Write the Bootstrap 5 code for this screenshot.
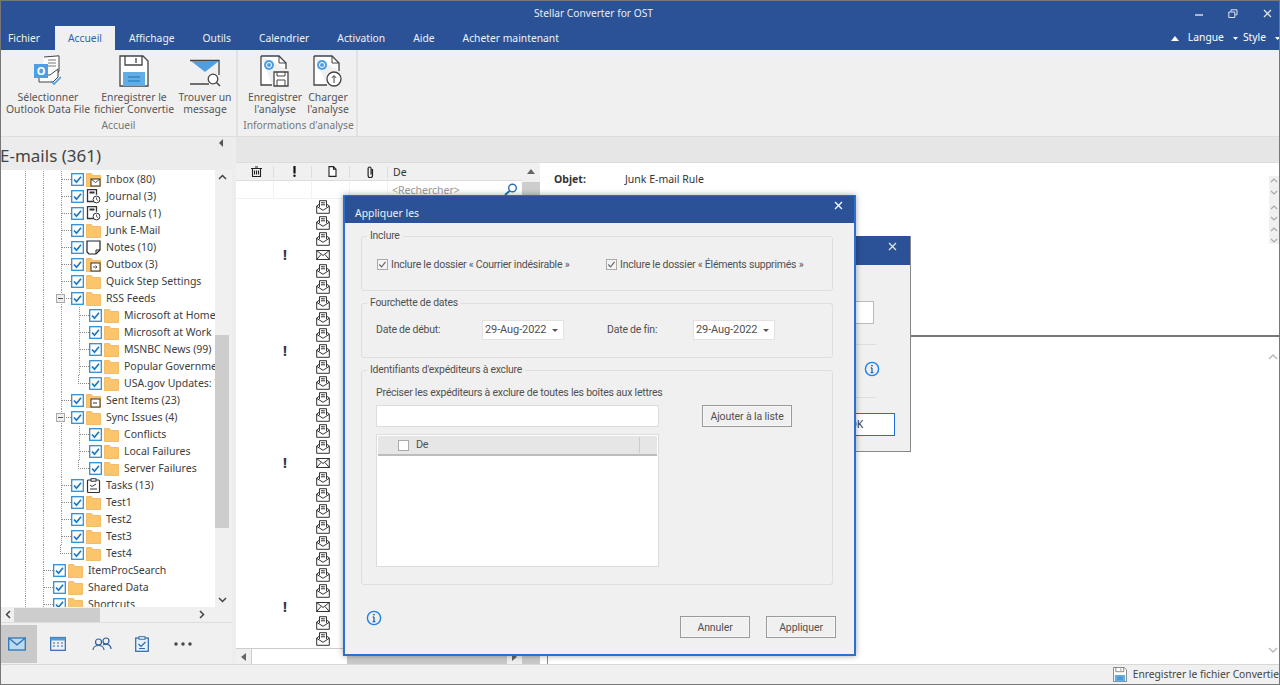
<!DOCTYPE html>
<html lang="fr"><head><meta charset="utf-8"><title>Stellar Converter for OST</title>
<link href="https://cdn.jsdelivr.net/npm/bootstrap@5.3.0/dist/css/bootstrap.min.css" rel="stylesheet">
<style>
html,body{margin:0;height:685px;overflow:hidden;background:#fff}
body{font-family:"Noto Sans","Open Sans",sans-serif;font-size:11px;color:#444}
svg{display:block;flex:none}
.app{width:1280px;height:685px;border:1px solid #777}
.tbar{height:25px;background:#2b5296;color:#e8edf5;font-size:10.2px;padding-left:533px}
.wctl{gap:25px;margin-right:7px}
.tabs{height:24px;background:#2b5296;color:#fff;font-size:10.3px;padding-left:7px}
.tabi{padding:0 14px;height:24px;line-height:24px;white-space:nowrap;color:#eef2f8}
.tabi.first{padding:0 15px 0 0}
.tabi.on{background:#f0f0f0;color:#2f62b3;padding:0 13px}
.rite{gap:5px;margin-right:-1px}
.ribbon{height:87px;background:#f0f0f0;border-bottom:1px solid #ddd}
.rgrp{border-right:2px solid #e2e2e2;padding-top:5px}
.g1{width:237px}.g2{width:120px}
.rbtn{line-height:12px;font-size:10.4px;color:#555;text-align:center;white-space:nowrap}
.rbtn svg{margin:0 auto 4px}
.b1{width:88px;margin-left:3px}.b2{width:84px}.b3{width:58px}.b4{width:58px;margin-left:8px}.b5{width:50px;margin-left:-1px}
.rlbl{font-size:10.3px;color:#777;line-height:12px;text-align:center;margin-top:4px}
.g2 .rlbl{padding-left:3px}
.mainr{height:527px}
.lpane{width:231px;background:#f0f0f0}
.lhead{height:33px;background:#ececec;font-size:17px;color:#444;line-height:23px;padding:7px 3px 0 0;white-space:nowrap}
.lttl{margin-left:-1px}
.tri-l{width:0;height:0;border:4px solid transparent;border-right:4px solid #555;border-left:0;margin:-5px 6px 0 auto}
.treew{height:437px}
.tree{width:214px;background:#fff;overflow:hidden;padding-top:1px}
.trow{height:17px;white-space:nowrap;font-size:10.5px;color:#3d3d3d;background-repeat:repeat-y;background-size:1px 2px;
 background-image:linear-gradient(#999 50%,transparent 50%),linear-gradient(#999 50%,transparent 50%);background-position:24px 0,42px 0}
.l1{padding-left:42px}.l2,.l2e{padding-left:60px}.l3,.l3e{padding-left:78px}
.l2,.l3e{background-image:linear-gradient(#999 50%,transparent 50%),linear-gradient(#999 50%,transparent 50%),linear-gradient(#999 50%,transparent 50%);background-position:24px 0,42px 0,60px 0}
.l3{background-image:linear-gradient(#999 50%,transparent 50%),linear-gradient(#999 50%,transparent 50%),linear-gradient(#999 50%,transparent 50%),linear-gradient(#999 50%,transparent 50%);background-position:24px 0,42px 0,60px 0,78px 0}
.hl{width:10px;height:1px;border-bottom:1px dotted #888;flex:none}
.hlend{height:9px;align-self:flex-start;border-left:1px dotted #888;margin-left:-1px;width:11px}
.trow .nm{margin-left:5px}
.trow .ck{margin-right:2px}
.exp{position:absolute;left:-5px;top:-4px;width:9px;height:9px;border:1px solid #aaa;background:#eee}
.exp::after{content:"";position:absolute;left:1px;right:1px;top:3px;height:1px;background:#555}
.vsb{width:14px;background:#f0f0f0}
.vthumb{height:193px;background:#cdcdcd;margin-top:155px}
.hsb{height:15px;width:228px;background:#f0f0f0}
.hthumb{width:86px;height:14px;background:#cdcdcd;margin-left:3px}
.lnav{height:42px;background:#f0f0f0;border-top:1px solid #ddd}
.nvb{width:36px;height:38px}.nvb.on{background:#c9c9c9;padding-right:5px}
.nv2{width:41px}.nv3{width:47px}.nv4{width:33px}.nv5{width:50px}
.gap4{width:4px;background:#ededed}
.band{height:26px;background:#e6e6e6;border-bottom:1px solid #dcdcdc}
.lstw{width:304px}
.lst{width:286px}
.lhd{height:18px;background:#f0f0f0;border-bottom:1px solid #ddd;font-size:10.5px;color:#333}
.cl{width:38px;height:12px;border-right:1px solid #ddd;padding-left:3px}
.dehd{margin:2px 0 0 5px}
.srow{height:18px;border-bottom:1px solid #f2f2f2;color:#999;font-size:10.5px}
.srch{margin:2px 0 0 4px}
.scl{width:38px;height:18px;border-right:1px solid #f2f2f2}
.mrows{height:447px;overflow:hidden}
.mr{height:16px}
.bang{width:80px;padding-left:18px;text-align:center;font-weight:700;font-size:14px;color:#333;line-height:16px}
.lvs{width:18px;background:#f0f0f0}
.lup{height:17px}
.lthumb{height:60px;background:#cdcdcd;margin-top:2px}
.lvb{height:16px;background:#c9c9c9}
.up-t{width:0;height:0;border:4px solid transparent;border-bottom:5px solid #666;border-top:0}
.lhs{height:16px;background:#f0f0f0;border-top:1px solid #ccc;width:286px}
.arrb{width:16px;border-right:1px solid #ccc}
.arrr{width:15px;background:#f0f0f0}
.lhtrack{width:95px;background:#fff}
.lhshadow{background:#c9c9c9}
.rp{background:#fff}
.rtop{height:174px;border-bottom:2px solid #777;padding:9px 0 0 14px;font-size:10.5px;color:#333}
.objl{width:71px;font-weight:700}
.mini{width:10px;background:#f0f0f0;margin-top:2px}
.rbot{padding-left:7px}
.rin{border-left:1px solid #888;padding:17px 1px 11px 0}
.status{height:20px;background:#f0f0f0;border-top:1px solid #d8d8d8;font-size:10.25px;color:#444;white-space:nowrap;overflow:hidden}
.stsv{margin-right:6px}
.dlgb{left:609px;top:235px;width:301px;height:216px;background:#f0f0f0;border:1px solid #888;border-top:0}
.hdb{height:29px;background:#2b5296;padding:6px 13px 0 0}
.inb{height:23px;background:#fff;border:1px solid #bbb;margin:36px 36px 0 0}
.sepb{height:1px;background:#ddd;margin:20px 34px 0 0}
.infb{margin:16px 30px 0 auto}
.okb{width:78px;height:23px;background:#fff;border:1px solid #1f6fe0;margin:15px 15px 0 auto;color:#333;font-size:10.5px}
.dlg{left:342px;top:194px;width:513px;height:461px;background:#f0f0f0;border:2px solid #2a6fd2;border-top:0;box-shadow:0 0 6px rgba(0,0,0,.35)}
.hd{height:28px;background:#2b5296;color:#eef2f8;font-size:10.4px;padding:0 11px 0 10px;border-top:1px solid #2b6cc8}
.hdt{margin-top:10px;line-height:15px}.hdx{margin-top:5px}
.dbody{padding:6px 21px 0 16px;color:#505050;font-family:Roboto,sans-serif;font-size:10.5px;letter-spacing:-.22px}
.grp{border:1px solid #dedede;border-radius:3px;padding:0 0 0 14px;margin:0 0 5px;min-width:0}
.grp legend{font-size:10.4px;line-height:14px;margin:0 0 0 -9px;padding:0 3px;color:#505050}
.gi{height:62px}.gd{height:62px}.gx{height:222px}
.rowi{padding-top:14px}.rowd{padding-top:10px}
.c1{gap:3px;margin-left:1px}
.cw1{width:228px}
.dt{width:82px;height:20px;background:#fff;border:1px solid #e2e2e2;font-size:11px;padding:0 5px 0 2px;color:#505050;letter-spacing:-.1px}
.caret{width:0;height:0;border:3px solid transparent;border-top:3px solid #555;border-bottom:0}
.dl1{width:106px}.dl2{width:86px;margin-left:43px}
.exin{width:283px;height:22px;background:#fff;border:1px solid #dcdcdc}
.tbl{width:283px;height:133px;background:#fff;border:1px solid #dcdcdc;margin-top:7px;padding:1px}
.thd{height:20px;background:#e6e6e6;border-bottom:2px solid #bcbcbc;padding-left:20px;gap:7px;font-size:10.8px}
.thc{margin-left:auto;margin-right:17px;width:1px;height:16px;background:#ccc}
.dbtn{background:#f0f0f0;border:1px solid #9a9a9a;border-radius:0;color:#505050;font-family:Roboto,sans-serif;font-size:10.5px;padding:0;line-height:19px;letter-spacing:-.1px;box-shadow:inset 0 0 0 1px #f7f7f7}
.bad{width:90px;height:22px;margin-left:43px}
.bft{width:70px;height:22px}
.dfoot{padding:0 18px 16px 21px;margin-top:auto}
.infm{margin-bottom:12px}
.ex8{margin-top:8px;height:20px}
</style></head><body>
<svg width="0" height="0" class="position-absolute"><defs>
<symbol id="fo" viewBox="0 0 15 15"><path d="M.5 1.500h5l1.500 2h7.500v11H.5z" fill="#fcc56c" stroke="#eeb458" stroke-width=".8"/></symbol>
<symbol id="ck" viewBox="0 0 13 13"><rect x=".7" y=".7" width="11.600" height="11.600" fill="#fff" stroke="#2e8fd6" stroke-width="1.300"/><path d="M3 6.500l2.500 2.700 4.500-5.400" fill="none" stroke="#1c78c2" stroke-width="1.700"/></symbol>
<symbol id="mo" viewBox="0 0 14 14"><path d="M.7 6v7.300h12.600V6L10.500 4M.7 6l2.800-2M.7 6.300L7 10.300l6.300-4M3.500 7V.7h7V7M5 2.800h4M5 4.800h4" fill="none" stroke="#333" stroke-width="1"/></symbol>
<symbol id="mc" viewBox="0 0 14 14"><rect x=".7" y="2.500" width="12.600" height="9" fill="none" stroke="#333"/><path d="M.7 2.500L7 7.500l6.300-5M.7 11.500L5 6.500M13.300 11.500L9 6.500" fill="none" stroke="#333"/></symbol>
<symbol id="inf" viewBox="0 0 16 16"><circle cx="8" cy="8" r="6.600" fill="none" stroke="#1f80e8" stroke-width="1.400"/><path d="M8 7v4.500M6.600 11.600h2.800M6.800 7h1.200" stroke="#1f66b8" stroke-width="1.300" fill="none"/><circle cx="8" cy="4.600" r=".9" fill="#1f66b8"/></symbol>
<symbol id="jr" viewBox="0 0 15 15"><path d="M8 12.500H1.500V.7h9v5" fill="none" stroke="#333" stroke-width="1.300"/><path d="M3.500 2.500h5v2h-5z" fill="#333"/><circle cx="10.500" cy="10.500" r="3.400" fill="#fff" stroke="#333"/><path d="M10.500 8.500v2l1.500 1" fill="none" stroke="#333" stroke-width=".8"/></symbol>
<symbol id="cbx" viewBox="0 0 12 12"><rect x=".5" y=".5" width="11" height="11" fill="#f4f4f4" stroke="#a5a5a5"/><path d="M2.500 6l2.500 2.600 4.300-5.400" fill="none" stroke="#666" stroke-width="1.200"/></symbol>
<symbol id="sv" viewBox="0 0 30 32"><path d="M1 1h23l5 5v25H1z" fill="#fff" stroke="#444" stroke-width="1.300"/><path d="M6 1v9h17V1M17 3v5" fill="none" stroke="#444" stroke-width="1.300"/><rect x="4" y="17" width="22" height="14" fill="#62aee4"/><path d="M9 22h12M9 26h12" stroke="#2a6ca8" stroke-width="1.200"/></symbol>
</defs></svg>
<div class="app d-flex flex-column position-relative overflow-hidden">
 <div class="tbar d-flex align-items-center justify-content-between">
  <span>Stellar Converter for OST</span>
  <div class="d-flex align-items-center wctl">
   <svg width="8" height="10" viewBox="0 0 8 10"><path d="M0 6h8" stroke="#dfe6f2" stroke-width="1.400"/></svg>
   <svg width="10" height="10" viewBox="0 0 10 10"><path d="M3 2.500V.8h6v5H7.200M.8 3h6v5.500h-6z" fill="none" stroke="#dfe6f2"/></svg>
   <svg width="9" height="9" viewBox="0 0 9 9"><path d="M1 1l7 7M8 1L1 8" stroke="#dfe6f2" stroke-width="1.300"/></svg>
  </div>
 </div>
 <div class="tabs d-flex align-items-center">
  <span class="tabi first">Fichier</span><span class="tabi on">Accueil</span><span class="tabi">Affichage</span><span class="tabi">Outils</span><span class="tabi">Calendrier</span><span class="tabi">Activation</span><span class="tabi">Aide</span><span class="tabi">Acheter maintenant</span>
  <div class="ms-auto d-flex align-items-center rite">
   <svg class="me-1" width="8" height="5" viewBox="0 0 8 5"><path d="M4 0l4 5H0z" fill="#fff"/></svg><span class="me-1">Langue</span>
   <svg width="5" height="3" viewBox="0 0 5 3"><path d="M0 0h5L2.500 3z" fill="#fff"/></svg><span>Style</span>
   <svg class="ms-1" width="5" height="3" viewBox="0 0 5 3"><path d="M0 0h5L2.500 3z" fill="#fff"/></svg>
  </div>
 </div>
 <div class="ribbon d-flex">
  <div class="rgrp g1 d-flex flex-column">
   <div class="d-flex">
    <div class="rbtn b1"><svg width="31" height="32" viewBox="0 0 31 32"><path d="M11 2L26 .8V16l-4 6H8" fill="#fff" stroke="#444"/><path d="M15 5h8M15 8h8M15 11h8" stroke="#777"/><path d="M6 20v7h14l5-5V14l-8 6z" fill="#fff" stroke="#444"/><rect x="1" y="9" width="14" height="14" fill="#4f9fe0"/><text x="8" y="20" text-anchor="middle" fill="#fff" font-size="11" font-weight="700" font-family="Noto Sans">O</text><path d="M18 26l3 3 7-7" fill="none" stroke="#4d9fe0" stroke-width="1.600"/></svg>Sélectionner<br>Outlook Data File</div>
    <div class="rbtn b2"><svg width="30" height="32" viewBox="0 0 30 32"><use href="#sv"/></svg>Enregistrer le<br>fichier Convertie</div>
    <div class="rbtn b3"><svg width="32" height="32" viewBox="0 -4 32 32"><path d="M1 1.500h29V16M20 25H1z" fill="none" stroke="#444" stroke-width="1.300"/><path d="M2 2l14 11L30 2z" fill="#4f9fe0"/><circle cx="24" cy="20" r="4.800" fill="#fff" stroke="#444" stroke-width="1.300"/><path d="M27.500 23.500l3.500 3.500" stroke="#444" stroke-width="1.500"/></svg>Trouver un<br>message</div>
   </div>
   <div class="rlbl">Accueil</div>
  </div>
  <div class="rgrp g2 d-flex flex-column">
   <div class="d-flex">
    <div class="rbtn b4"><svg width="30" height="32" viewBox="0 0 30 32"><path d="M1 1h18l7 7v6M12 30H1V1" fill="#fff" stroke="#444" stroke-width="1.300"/><path d="M19 1v7h7" fill="none" stroke="#444"/><circle cx="9" cy="10" r="5" fill="#4f9fe0"/><circle cx="9" cy="10" r="2.500" fill="none" stroke="#fff"/><path d="M14 17h14v14H14z" fill="#fff" stroke="#444" stroke-width="1.300"/><path d="M17 17v4h8v-4M17 31v-6h8v6" fill="none" stroke="#444"/></svg>Enregistrer<br>l'analyse</div>
    <div class="rbtn b5"><svg width="30" height="32" viewBox="0 0 30 32"><path d="M1 1h18l7 7v8M14 30H1V1" fill="#fff" stroke="#444" stroke-width="1.300"/><path d="M19 1v7h7" fill="none" stroke="#444"/><circle cx="9" cy="10" r="5" fill="#4f9fe0"/><circle cx="9" cy="10" r="2.500" fill="none" stroke="#fff"/><circle cx="21" cy="24" r="7" fill="#fff" stroke="#444" stroke-width="1.300"/><path d="M21 28v-7M18.800 23l2.200-2.500 2.200 2.500" fill="none" stroke="#444"/></svg>Charger<br>l'analyse</div>
   </div>
   <div class="rlbl">Informations d'analyse</div>
  </div>
 </div>
 <div class="mainr d-flex">
  <div class="lpane d-flex flex-column">
   <div class="lhead d-flex"><span class="lttl">E-mails (361)</span><div class="tri-l"></div></div>
   <div class="treew d-flex">
    <div class="tree">
     <div class="trow l2 d-flex align-items-center"><span class="hl"></span><svg class="ck" width="13" height="13"><use href="#ck"/></svg><svg width="15" height="15" viewBox="0 0 15 15"><use href="#fo"/><rect x="5" y="7" width="9" height="7" fill="#fff" stroke="#333"/><path d="M5 7l4.500 3.500L14 7" fill="none" stroke="#333" stroke-width=".8"/></svg><span class="nm">Inbox (80)</span></div>
     <div class="trow l2 d-flex align-items-center"><span class="hl"></span><svg class="ck" width="13" height="13"><use href="#ck"/></svg><svg width="15" height="15"><use href="#jr"/></svg><span class="nm">Journal (3)</span></div>
     <div class="trow l2 d-flex align-items-center"><span class="hl"></span><svg class="ck" width="13" height="13"><use href="#ck"/></svg><svg width="15" height="15"><use href="#jr"/></svg><span class="nm">journals (1)</span></div>
     <div class="trow l2 d-flex align-items-center"><span class="hl"></span><svg class="ck" width="13" height="13"><use href="#ck"/></svg><svg width="15" height="15"><use href="#fo"/></svg><span class="nm">Junk E-Mail</span></div>
     <div class="trow l2 d-flex align-items-center"><span class="hl"></span><svg class="ck" width="13" height="13"><use href="#ck"/></svg><svg width="15" height="15" viewBox="0 0 15 15"><path d="M1 1h13v9l-4 4H3l-2-2z" fill="#fff" stroke="#222" stroke-width="1.200"/><path d="M10 14v-4h4" fill="none" stroke="#222"/></svg><span class="nm">Notes (10)</span></div>
     <div class="trow l2 d-flex align-items-center"><span class="hl"></span><svg class="ck" width="13" height="13"><use href="#ck"/></svg><svg width="15" height="15" viewBox="0 0 15 15"><use href="#fo"/><rect x="5" y="6" width="9" height="8" fill="#fff" stroke="#333"/><path d="M7 10h4M9.500 8.500L11 10l-1.500 1.500" fill="none" stroke="#333" stroke-width=".8"/></svg><span class="nm">Outbox (3)</span></div>
     <div class="trow l2 d-flex align-items-center"><span class="hl"></span><svg class="ck" width="13" height="13"><use href="#ck"/></svg><svg width="15" height="15"><use href="#fo"/></svg><span class="nm">Quick Step Settings</span></div>
     <div class="trow l2 d-flex align-items-center"><span class="hl position-relative"><span class="exp"></span></span><svg class="ck" width="13" height="13"><use href="#ck"/></svg><svg width="15" height="15"><use href="#fo"/></svg><span class="nm">RSS Feeds</span></div>
     <div class="trow l3 d-flex align-items-center"><span class="hl"></span><svg class="ck" width="13" height="13"><use href="#ck"/></svg><svg width="15" height="15"><use href="#fo"/></svg><span class="nm">Microsoft at Home</span></div>
     <div class="trow l3 d-flex align-items-center"><span class="hl"></span><svg class="ck" width="13" height="13"><use href="#ck"/></svg><svg width="15" height="15"><use href="#fo"/></svg><span class="nm">Microsoft at Work</span></div>
     <div class="trow l3 d-flex align-items-center"><span class="hl"></span><svg class="ck" width="13" height="13"><use href="#ck"/></svg><svg width="15" height="15"><use href="#fo"/></svg><span class="nm">MSNBC News (99)</span></div>
     <div class="trow l3 d-flex align-items-center"><span class="hl"></span><svg class="ck" width="13" height="13"><use href="#ck"/></svg><svg width="15" height="15"><use href="#fo"/></svg><span class="nm">Popular Government</span></div>
     <div class="trow l3e d-flex align-items-center"><span class="hl hlend"></span><svg class="ck" width="13" height="13"><use href="#ck"/></svg><svg width="15" height="15"><use href="#fo"/></svg><span class="nm">USA.gov Updates: Y</span></div>
     <div class="trow l2 d-flex align-items-center"><span class="hl"></span><svg class="ck" width="13" height="13"><use href="#ck"/></svg><svg width="15" height="15" viewBox="0 0 15 15"><use href="#fo"/><rect x="5" y="6" width="9" height="8" fill="#fff" stroke="#333"/><path d="M7 10h4" stroke="#333"/></svg><span class="nm">Sent Items (23)</span></div>
     <div class="trow l2 d-flex align-items-center"><span class="hl position-relative"><span class="exp"></span></span><svg class="ck" width="13" height="13"><use href="#ck"/></svg><svg width="15" height="15"><use href="#fo"/></svg><span class="nm">Sync Issues (4)</span></div>
     <div class="trow l3 d-flex align-items-center"><span class="hl"></span><svg class="ck" width="13" height="13"><use href="#ck"/></svg><svg width="15" height="15"><use href="#fo"/></svg><span class="nm">Conflicts</span></div>
     <div class="trow l3 d-flex align-items-center"><span class="hl"></span><svg class="ck" width="13" height="13"><use href="#ck"/></svg><svg width="15" height="15"><use href="#fo"/></svg><span class="nm">Local Failures</span></div>
     <div class="trow l3e d-flex align-items-center"><span class="hl hlend"></span><svg class="ck" width="13" height="13"><use href="#ck"/></svg><svg width="15" height="15"><use href="#fo"/></svg><span class="nm">Server Failures</span></div>
     <div class="trow l2 d-flex align-items-center"><span class="hl"></span><svg class="ck" width="13" height="13"><use href="#ck"/></svg><svg width="15" height="15" viewBox="0 0 15 15"><rect x="1.500" y="2" width="12" height="12.500" fill="#fff" stroke="#333" stroke-width="1.200" rx="1"/><rect x="5" y=".7" width="5" height="2.500" fill="#fff" stroke="#333"/><path d="M4 7l2 1.500L10 6M4 11h7" fill="none" stroke="#333"/></svg><span class="nm">Tasks (13)</span></div>
     <div class="trow l2 d-flex align-items-center"><span class="hl"></span><svg class="ck" width="13" height="13"><use href="#ck"/></svg><svg width="15" height="15"><use href="#fo"/></svg><span class="nm">Test1</span></div>
     <div class="trow l2 d-flex align-items-center"><span class="hl"></span><svg class="ck" width="13" height="13"><use href="#ck"/></svg><svg width="15" height="15"><use href="#fo"/></svg><span class="nm">Test2</span></div>
     <div class="trow l2 d-flex align-items-center"><span class="hl"></span><svg class="ck" width="13" height="13"><use href="#ck"/></svg><svg width="15" height="15"><use href="#fo"/></svg><span class="nm">Test3</span></div>
     <div class="trow l2e d-flex align-items-center"><span class="hl hlend"></span><svg class="ck" width="13" height="13"><use href="#ck"/></svg><svg width="15" height="15"><use href="#fo"/></svg><span class="nm">Test4</span></div>
     <div class="trow l1 d-flex align-items-center"><span class="hl"></span><svg class="ck" width="13" height="13"><use href="#ck"/></svg><svg width="15" height="15"><use href="#fo"/></svg><span class="nm">ItemProcSearch</span></div>
     <div class="trow l1 d-flex align-items-center"><span class="hl"></span><svg class="ck" width="13" height="13"><use href="#ck"/></svg><svg width="15" height="15"><use href="#fo"/></svg><span class="nm">Shared Data</span></div>
     <div class="trow l1 d-flex align-items-center"><span class="hl"></span><svg class="ck" width="13" height="13"><use href="#ck"/></svg><svg width="15" height="15"><use href="#fo"/></svg><span class="nm">Shortcuts</span></div>
    </div>
    <div class="vsb d-flex flex-column align-items-center position-relative">
     <svg class="mt-1" width="9" height="6" viewBox="0 0 9 6"><path d="M1 5l3.500-3.500L8 5" fill="none" stroke="#444" stroke-width="1.500"/></svg>
     <div class="vthumb w-100"></div>
     <svg class="mt-auto mb-1" width="9" height="6" viewBox="0 0 9 6"><path d="M1 1l3.500 3.500L8 1" fill="none" stroke="#444" stroke-width="1.500"/></svg>
    </div>
   </div>
   <div class="hsb d-flex align-items-center">
    <svg class="ms-1" width="6" height="9" viewBox="0 0 6 9"><path d="M5 1L1.500 4.500 5 8" fill="none" stroke="#444" stroke-width="1.500"/></svg>
    <div class="hthumb"></div>
    <svg class="ms-auto me-4" width="6" height="9" viewBox="0 0 6 9"><path d="M1 1l3.500 3.500L1 8" fill="none" stroke="#444" stroke-width="1.500"/></svg>
   </div>
   <div class="lnav d-flex align-items-center">
    <div class="nvb on d-flex align-items-center justify-content-center"><svg width="18" height="14" viewBox="0 0 18 14"><rect x=".7" y="1" width="16.600" height="12" fill="#bcd9f0" stroke="#2c77bb" stroke-width="1.300"/><path d="M1 1.300l8 6.500 8-6.500" fill="none" stroke="#2c77bb" stroke-width="1.300"/></svg></div>
    <div class="nvb nv2 d-flex align-items-center justify-content-center"><svg width="16" height="15" viewBox="0 0 16 15"><rect x=".7" y="1.500" width="14.600" height="12.800" fill="none" stroke="#2c6aa8" stroke-width="1.200"/><rect x=".7" y="1.500" width="14.600" height="3" fill="#5a9ad0"/><path d="M3 7h2M7 7h2M11 7h2M3 10h2M7 10h2M11 10h2" stroke="#2c6aa8" stroke-width="1.200"/></svg></div>
    <div class="nvb nv3 d-flex align-items-center justify-content-center"><svg width="20" height="14" viewBox="0 0 20 14"><circle cx="6.500" cy="5" r="3" fill="none" stroke="#2c5f98" stroke-width="1.200"/><circle cx="14" cy="4" r="3" fill="none" stroke="#2c5f98" stroke-width="1.200"/><path d="M1 13c0-6 11-6 11 0M11 8c4-2 8 0 8 4" fill="none" stroke="#2c5f98" stroke-width="1.200"/></svg></div>
    <div class="nvb nv4 d-flex align-items-center justify-content-center"><svg width="14" height="16" viewBox="0 0 14 16"><rect x=".7" y="2" width="12.600" height="13.300" fill="#e4f0fa" stroke="#2c6aa8" stroke-width="1.200"/><rect x="4" y=".7" width="6" height="2.500" fill="#fff" stroke="#2c6aa8"/><path d="M3.500 8l2.500 2.500 4.500-4.500M4 12.500h6" fill="none" stroke="#2c6aa8" stroke-width="1.200"/></svg></div>
    <div class="nvb nv5 d-flex align-items-center justify-content-center"><svg width="20" height="4" viewBox="0 0 20 4"><circle cx="3" cy="2" r="1.700" fill="#444"/><circle cx="10" cy="2" r="1.700" fill="#444"/><circle cx="17" cy="2" r="1.700" fill="#444"/></svg></div>
   </div>
  </div>
  <div class="gap4"></div>
  <div class="flex-grow-1 d-flex flex-column">
   <div class="band"></div>
   <div class="flex-grow-1 d-flex">
    <div class="lstw d-flex">
     <div class="lst d-flex flex-column bg-white">
      <div class="lhd d-flex align-items-center">
       <div class="cl d-flex justify-content-center align-items-center"><svg width="11" height="11" viewBox="0 0 11 11"><path d="M4 1h3M0 2.500h11M1.500 2.500v8h8v-8M3.500 4.500v4M5.500 4.500v4M7.500 4.500v4" fill="none" stroke="#222" stroke-width="1.100"/></svg></div>
       <div class="cl d-flex justify-content-center align-items-center"><svg width="3" height="11" viewBox="0 0 3 11"><path d="M1.500 0v7.500" stroke="#111" stroke-width="2.200"/><circle cx="1.500" cy="9.700" r="1.200" fill="#111"/></svg></div>
       <div class="cl d-flex justify-content-center align-items-center"><svg width="9" height="11" viewBox="0 0 9 11"><path d="M1 .6h4.500L8 3.200v7.200H1zM5.500.6v2.600H8" fill="#fff" stroke="#222" stroke-width="1.100"/></svg></div>
       <div class="cl d-flex justify-content-center align-items-center"><svg width="7" height="12" viewBox="0 0 7 12"><path d="M5.500 3v6.500a2.200 2.200 0 0 1-4.400 0V2.500a1.500 1.500 0 0 1 3 0v6" fill="none" stroke="#222" stroke-width="1.200"/></svg></div>
       <span class="dehd">De</span>
      </div>
      <div class="srow d-flex align-items-center">
       <div class="scl"></div><div class="scl"></div><div class="scl"></div><div class="scl"></div>
       <span class="srch">&lt;Rechercher&gt;</span>
       <svg class="ms-auto me-1" width="14" height="13" viewBox="0 0 14 13"><circle cx="8.500" cy="5" r="3.800" fill="none" stroke="#2c6fb0" stroke-width="1.400"/><path d="M5.500 8L1 12" stroke="#2c6fb0" stroke-width="2"/></svg>
      </div>
      <div class="mrows flex-grow-1">
       <div class="mr d-flex align-items-center"><div class="bang"></div><svg width="14" height="14"><use href="#mo"/></svg></div>
       <div class="mr d-flex align-items-center"><div class="bang"></div><svg width="14" height="14"><use href="#mo"/></svg></div>
       <div class="mr d-flex align-items-center"><div class="bang"></div><svg width="14" height="14"><use href="#mo"/></svg></div>
       <div class="mr d-flex align-items-center"><div class="bang">!</div><svg width="14" height="14"><use href="#mc"/></svg></div>
       <div class="mr d-flex align-items-center"><div class="bang"></div><svg width="14" height="14"><use href="#mo"/></svg></div>
       <div class="mr d-flex align-items-center"><div class="bang"></div><svg width="14" height="14"><use href="#mo"/></svg></div>
       <div class="mr d-flex align-items-center"><div class="bang"></div><svg width="14" height="14"><use href="#mo"/></svg></div>
       <div class="mr d-flex align-items-center"><div class="bang"></div><svg width="14" height="14"><use href="#mo"/></svg></div>
       <div class="mr d-flex align-items-center"><div class="bang"></div><svg width="14" height="14"><use href="#mo"/></svg></div>
       <div class="mr d-flex align-items-center"><div class="bang">!</div><svg width="14" height="14"><use href="#mo"/></svg></div>
       <div class="mr d-flex align-items-center"><div class="bang"></div><svg width="14" height="14"><use href="#mo"/></svg></div>
       <div class="mr d-flex align-items-center"><div class="bang"></div><svg width="14" height="14"><use href="#mo"/></svg></div>
       <div class="mr d-flex align-items-center"><div class="bang"></div><svg width="14" height="14"><use href="#mo"/></svg></div>
       <div class="mr d-flex align-items-center"><div class="bang"></div><svg width="14" height="14"><use href="#mo"/></svg></div>
       <div class="mr d-flex align-items-center"><div class="bang"></div><svg width="14" height="14"><use href="#mo"/></svg></div>
       <div class="mr d-flex align-items-center"><div class="bang"></div><svg width="14" height="14"><use href="#mo"/></svg></div>
       <div class="mr d-flex align-items-center"><div class="bang">!</div><svg width="14" height="14"><use href="#mc"/></svg></div>
       <div class="mr d-flex align-items-center"><div class="bang"></div><svg width="14" height="14"><use href="#mo"/></svg></div>
       <div class="mr d-flex align-items-center"><div class="bang"></div><svg width="14" height="14"><use href="#mo"/></svg></div>
       <div class="mr d-flex align-items-center"><div class="bang"></div><svg width="14" height="14"><use href="#mo"/></svg></div>
       <div class="mr d-flex align-items-center"><div class="bang"></div><svg width="14" height="14"><use href="#mo"/></svg></div>
       <div class="mr d-flex align-items-center"><div class="bang"></div><svg width="14" height="14"><use href="#mo"/></svg></div>
       <div class="mr d-flex align-items-center"><div class="bang"></div><svg width="14" height="14"><use href="#mo"/></svg></div>
       <div class="mr d-flex align-items-center"><div class="bang"></div><svg width="14" height="14"><use href="#mo"/></svg></div>
       <div class="mr d-flex align-items-center"><div class="bang"></div><svg width="14" height="14"><use href="#mo"/></svg></div>
       <div class="mr d-flex align-items-center"><div class="bang">!</div><svg width="14" height="14"><use href="#mc"/></svg></div>
       <div class="mr d-flex align-items-center"><div class="bang"></div><svg width="14" height="14"><use href="#mo"/></svg></div>
       <div class="mr d-flex align-items-center"><div class="bang"></div><svg width="14" height="14"><use href="#mo"/></svg></div>
      </div>
      <div class="lhs d-flex">
       <div class="arrb d-flex align-items-center justify-content-center"><svg width="5" height="8" viewBox="0 0 5 8"><path d="M5 0v8L0 4z" fill="#666"/></svg></div>
       <div class="lhtrack"></div><div class="lhshadow flex-grow-1"></div>
       <div class="arrr d-flex align-items-center justify-content-center"><svg width="5" height="8" viewBox="0 0 5 8"><path d="M0 0v8l5-4z" fill="#666"/></svg></div>
      </div>
     </div>
     <div class="lvs d-flex flex-column">
      <div class="lup d-flex align-items-center justify-content-center"><div class="up-t"></div></div>
      <div class="lthumb"></div>
      <div class="lvb mt-auto"></div>
     </div>
    </div>
    <div class="rp flex-grow-1 d-flex flex-column">
     <div class="rtop d-flex">
      <span class="objl">Objet:</span><span>Junk E-mail Rule</span>
      <div class="mini ms-auto d-flex flex-column align-items-center gap-1 align-self-start mt-1">
       <svg width="8" height="24" viewBox="0 0 8 24"><path d="M1 6l3-3 3 3M1 15l3 3 3-3" fill="none" stroke="#aaa" stroke-width="1.200"/></svg>
       <svg width="8" height="40" viewBox="0 0 8 40"><path d="M1 5l3-3 3 3M1 13l3 3 3-3M1 27l3-3 3 3M1 35l3 3 3-3" fill="none" stroke="#aaa" stroke-width="1.200"/></svg>
      </div>
     </div>
     <div class="rbot flex-grow-1 d-flex"><div class="rin flex-grow-1 d-flex flex-column justify-content-between align-items-end">
      <svg width="10" height="6" viewBox="0 0 10 6"><path d="M1 5l4-4 4 4" fill="none" stroke="#bbb" stroke-width="1.500"/></svg>
      <svg width="10" height="6" viewBox="0 0 10 6"><path d="M1 1l4 4 4-4" fill="none" stroke="#bbb" stroke-width="1.500"/></svg>
     </div></div>
    </div>
   </div>
  </div>
 </div>
 <div class="status d-flex align-items-center justify-content-end">
  <svg class="stsv" width="14" height="15" viewBox="0 0 30 32"><use href="#sv"/></svg><span>Enregistrer le fichier Convertie</span>
 </div>

 <div class="dlgb position-absolute d-flex flex-column">
  <div class="hdb d-flex align-items-start justify-content-end"><svg width="9" height="9" viewBox="0 0 9 9"><path d="M1 1l7 7M8 1L1 8" stroke="#dfe6f2" stroke-width="1.300"/></svg></div>
  <div class="inb"></div>
  <div class="sepb"></div>
  <svg class="infb" width="16" height="16"><use href="#inf"/></svg>
  <div class="sepb"></div>
  <div class="okb d-flex align-items-center justify-content-center">OK</div>
 </div>

 <div class="dlg position-absolute d-flex flex-column">
  <div class="hd d-flex align-items-start justify-content-between"><span class="hdt">Appliquer les</span><svg class="hdx" width="9" height="9" viewBox="0 0 9 9"><path d="M1 1l7 7M8 1L1 8" stroke="#fff" stroke-width="1.300"/></svg></div>
  <div class="dbody">
   <fieldset class="grp gi"><legend class="float-none w-auto">Inclure</legend>
    <div class="d-flex rowi">
     <div class="cw1 d-flex align-items-center c1"><svg width="11" height="11"><use href="#cbx"/></svg><span>Inclure le dossier « Courrier indésirable »</span></div>
     <div class="d-flex align-items-center c1"><svg width="11" height="11"><use href="#cbx"/></svg><span>Inclure le dossier « Éléments supprimés »</span></div>
    </div>
   </fieldset>
   <fieldset class="grp gd"><legend class="float-none w-auto">Fourchette de dates</legend>
    <div class="d-flex align-items-center rowd">
     <span class="dl1">Date de début:</span>
     <div class="dt d-flex align-items-center justify-content-between"><span>29-Aug-2022</span><i class="caret"></i></div>
     <span class="dl2">Date de fin:</span>
     <div class="dt d-flex align-items-center justify-content-between"><span>29-Aug-2022</span><i class="caret"></i></div>
    </div>
   </fieldset>
   <fieldset class="grp gx"><legend class="float-none w-auto">Identifiants d'expéditeurs à exclure</legend>
    <div class="ex8">Préciser les expéditeurs à exclure de toutes les boîtes aux lettres</div>
    <div class="d-flex">
     <div class="exin"></div>
     <button type="button" class="btn dbtn bad">Ajouter à la liste</button>
    </div>
    <div class="tbl">
     <div class="thd d-flex align-items-center"><svg width="11" height="11" viewBox="0 0 11 11"><rect x=".5" y=".5" width="10" height="10" fill="#fff" stroke="#aaa"/></svg><span>De</span><span class="thc"></span></div>
    </div>
   </fieldset>
  </div>
  <div class="dfoot d-flex align-items-end justify-content-between">
   <svg class="infm" width="16" height="16"><use href="#inf"/></svg>
   <div class="d-flex gap-3">
    <button type="button" class="btn dbtn bft">Annuler</button>
    <button type="button" class="btn dbtn bft">Appliquer</button>
   </div>
  </div>
 </div>
</div>
</body></html>
